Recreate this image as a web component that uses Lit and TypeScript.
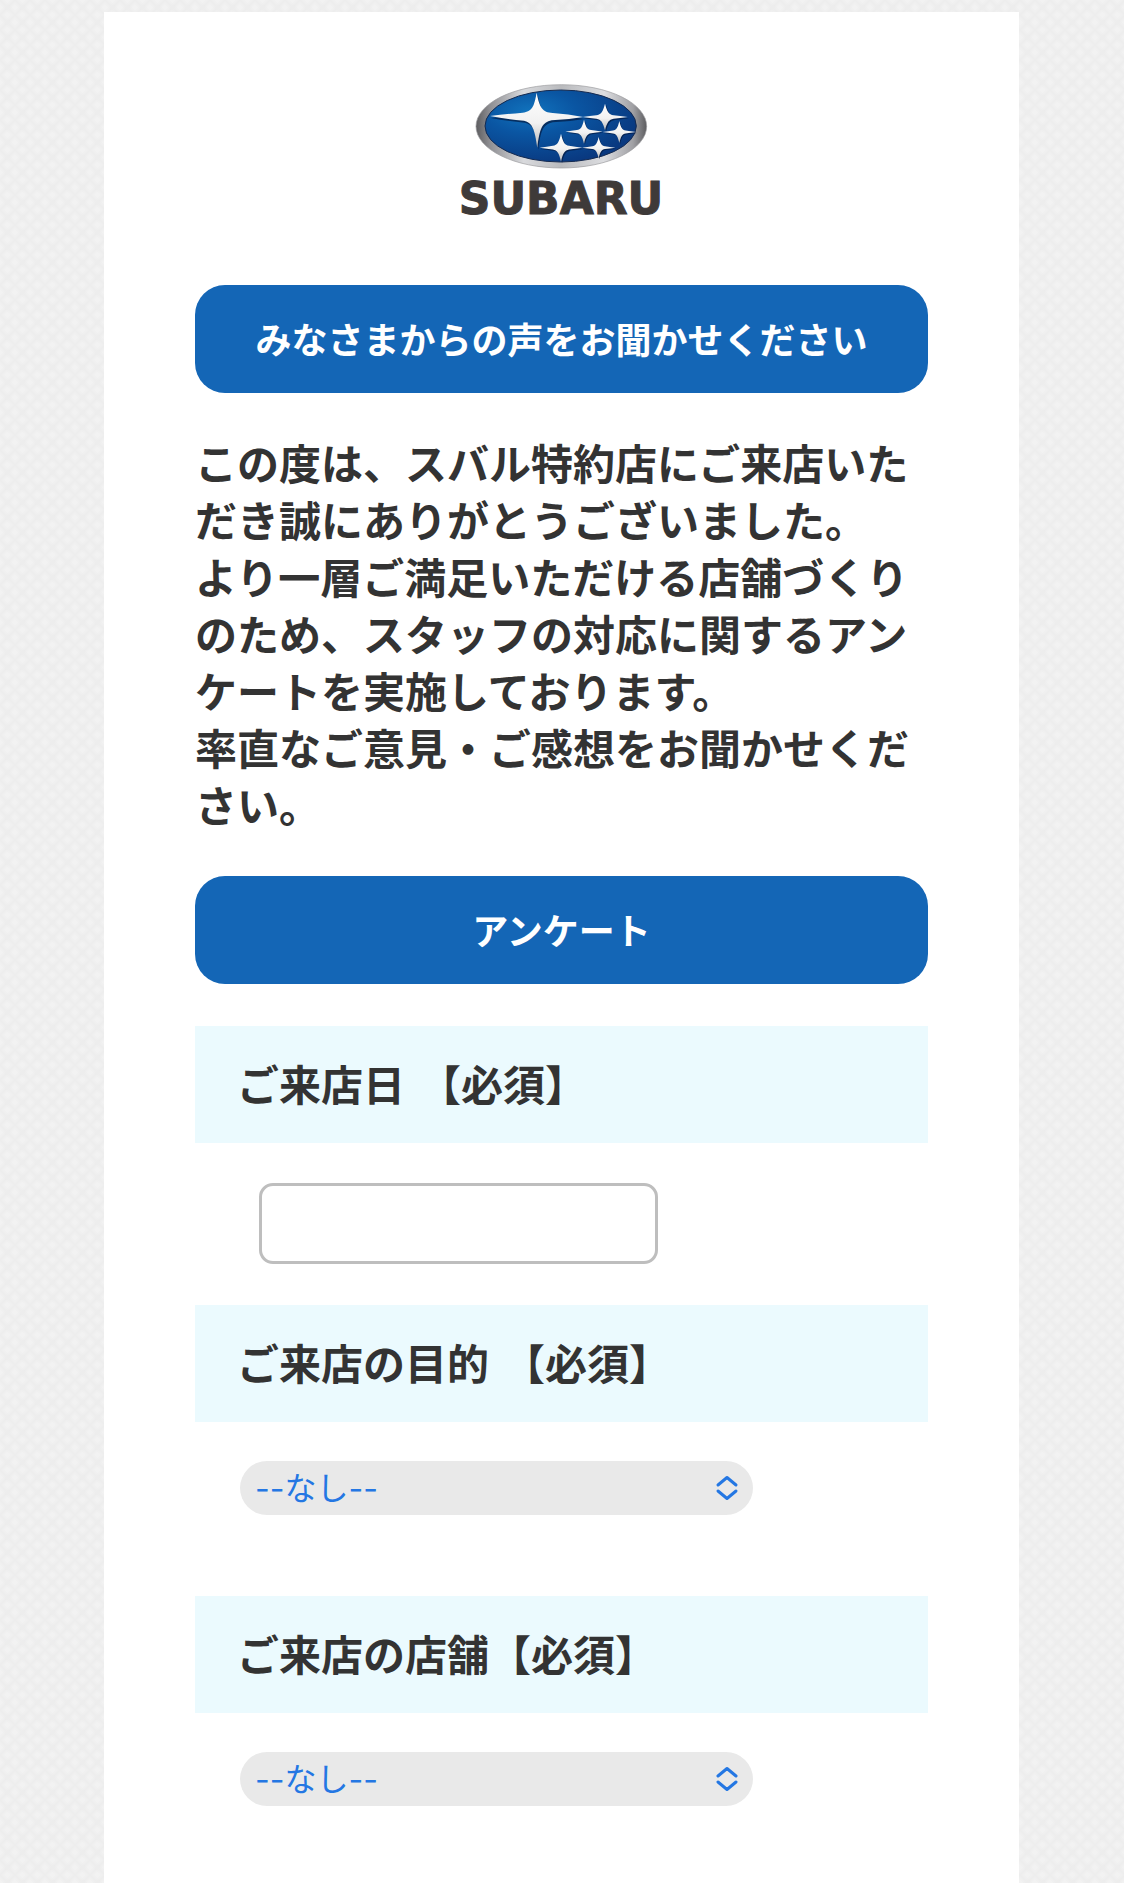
import { LitElement, html, css, svg } from "lit";
import { customElement, property } from "lit/decorators.js";

const STAR = "M0 -1 C.09 -.4 .17 -.19 .38 -.13 Q.65 -.07 1 0 Q.65 .07 .38 .13 C.17 .19 .09 .4 0 1 C-.09 .4 -.17 .19 -.38 .13 Q-.65 .07 -1 0 Q-.65 -.07 -.38 -.13 C-.17 -.19 -.09 -.4 0 -1Z";

interface Star {
  x: number;
  y: number;
  rx: number;
  ry: number;
}

const SMALL_STARS: Star[] = [
  { x: 495, y: 141, rx: 68, ry: 40 },
  { x: 432, y: 185, rx: 56, ry: 36 },
  { x: 538, y: 186, rx: 50, ry: 33 },
  { x: 363, y: 233, rx: 64, ry: 42 },
  { x: 476, y: 233, rx: 50, ry: 32 },
];

@customElement("brand-logo")
export class BrandLogo extends LitElement {
  static styles = css`
    :host {
      display: flex;
      justify-content: center;
    }
    .logo {
      display: block;
      width: 240px;
      height: 160px;
    }
    .wordmark {
      font-family: "DejaVu Sans", sans-serif;
      font-weight: 700;
      font-size: 132px;
      fill: #3e3a39;
      stroke: #3e3a39;
      stroke-width: 3px;
    }
  `;

  private star(s: Star) {
    return svg`
      <g transform="translate(${s.x} ${s.y}) scale(${s.rx} ${s.ry})">
        <path d=${STAR} transform="translate(.05 .09)" fill="#03183f" opacity=".7"></path>
        <path d=${STAR} fill="url(#silver)"></path>
      </g>`;
  }

  render() {
    return html`
      <svg class="logo" viewBox="6 0 720 480" role="img" aria-label="SUBARU">
        <defs>
          <linearGradient id="rim" x1="0" y1="0" x2="1" y2="0">
            <stop offset="0" stop-color="#5d5d60"></stop>
            <stop offset=".08" stop-color="#8e8e92"></stop>
            <stop offset=".28" stop-color="#d9dadd"></stop>
            <stop offset=".5" stop-color="#b9babd"></stop>
            <stop offset=".75" stop-color="#dcdde0"></stop>
            <stop offset=".92" stop-color="#a0a0a4"></stop>
            <stop offset="1" stop-color="#5d5d60"></stop>
          </linearGradient>
          <radialGradient id="field" cx=".3" cy=".3" r=".75">
            <stop offset="0" stop-color="#1173bd"></stop>
            <stop offset=".4" stop-color="#0a56a3"></stop>
            <stop offset="1" stop-color="#09387f"></stop>
          </radialGradient>
          <linearGradient id="silver" x1="0" y1="0" x2="0" y2="1">
            <stop offset="0" stop-color="#ffffff"></stop>
            <stop offset=".55" stop-color="#f1f1f1"></stop>
            <stop offset="1" stop-color="#b9b9b9"></stop>
          </linearGradient>
        </defs>
        <ellipse cx="364" cy="169" rx="256" ry="125" fill="url(#rim)" stroke="#9a9a9d" stroke-width="2"></ellipse>
        <ellipse cx="362" cy="168" rx="227" ry="108" fill="url(#field)" stroke="#152a50" stroke-width="3"></ellipse>
        <path
          d="M290 68 C299 114 307 126 338 129 Q385 132 430 141 Q385 149 335 151 C306 157 299 176 292 233 C284 178 278 158 252 152 Q200 148 150 138 Q200 132 248 128 C277 124 282 110 290 68Z"
          transform="translate(3 6)" fill="#03183f" opacity=".7"></path>
        <path
          d="M290 68 C299 114 307 126 338 129 Q385 132 430 141 Q385 149 335 151 C306 157 299 176 292 233 C284 178 278 158 252 152 Q200 148 150 138 Q200 132 248 128 C277 124 282 110 290 68Z"
          fill="url(#silver)"></path>
        ${SMALL_STARS.map((s) => this.star(s))}
        <text class="wordmark" x="363" y="432" text-anchor="middle">SUBARU</text>
      </svg>
    `;
  }
}

@customElement("survey-field")
export class SurveyField extends LitElement {
  @property() label = "";
  @property() kind: "text" | "select" = "text";
  @property({ type: Boolean }) spaced = false;

  static styles = css`
    :host {
      display: block;
    }
    .title {
      display: block;
      padding: 28px 42px 32px;
      background: #ebfafe;
      color: #333;
      font-size: 42px;
      font-weight: 700;
      line-height: 57px;
    }
    .required.spaced {
      margin-left: 14px;
    }
    .text-body {
      padding: 40px 64px 41px;
    }
    .select-body {
      padding: 39px 45px 81px;
    }
    .input {
      display: block;
      box-sizing: border-box;
      width: 399px;
      max-width: 100%;
      height: 81px;
      padding: 0 16px;
      border: 3px solid #bebebe;
      border-radius: 14px;
      background: #fff;
      color: #333;
      font: inherit;
      font-size: 36px;
    }
    .picker {
      position: relative;
      width: 513px;
      max-width: 100%;
    }
    .select {
      appearance: none;
      display: block;
      box-sizing: border-box;
      width: 100%;
      height: 54px;
      padding: 0 48px 0 15px;
      border: 0;
      border-radius: 27px;
      background: #e9e9e9;
      color: #2477e3;
      font-family: Inter, "Noto Sans CJK JP", sans-serif;
      font-size: 32px;
      font-weight: 400;
    }
    .chevrons {
      position: absolute;
      right: 14px;
      top: 14px;
      width: 24px;
      height: 26px;
      pointer-events: none;
    }
  `;

  render() {
    return html`
      <label class="title" for="control"
        >${this.label}<span class="required ${this.spaced ? "spaced" : ""}">【必須】</span></label
      >
      ${this.kind === "text"
        ? html`<div class="text-body"><input class="input" id="control" type="text" required /></div>`
        : html`<div class="select-body">
            <div class="picker">
              <select class="select" id="control" required>
                <option value="">--なし--</option>
              </select>
              <svg class="chevrons" viewBox="0 0 24 26" fill="none" stroke="#2477e3" stroke-width="3"
                stroke-linecap="round" stroke-linejoin="round" aria-hidden="true">
                <path d="M3 10 L12 2.5 L21 10 M3 16 L12 23.5 L21 16"></path>
              </svg>
            </div>
          </div>`}
    `;
  }
}

@customElement("app-root")
export class AppRoot extends LitElement {
  static styles = css`
    :host {
      display: flex;
      flex-direction: column;
      box-sizing: border-box;
      min-height: 100vh;
      padding: 12px 105px 0 104px;
      background-color: #f2f2f2;
      background-image: linear-gradient(45deg, transparent 34%, #ededed 50%, transparent 66%),
        linear-gradient(-45deg, transparent 34%, #ededed 50%, transparent 66%);
      background-size: 15px 15px;
      color: #333;
      font-family: "Noto Sans CJK JP", sans-serif;
    }
    .card {
      flex: 1;
      padding: 58px 91px 0;
      background: #fff;
    }
    .banner {
      margin: 0;
      padding: 26px 24px 28px;
      border-radius: 30px;
      background: #1466b6;
      color: #fff;
      font-size: 36px;
      font-weight: 700;
      line-height: 54px;
      text-align: center;
    }
    .top {
      margin-top: 55px;
    }
    .intro {
      margin: 40px 0 44px;
      font-size: 42px;
      font-weight: 700;
      line-height: 57px;
    }
    .survey {
      margin-top: 42px;
    }
  `;

  render() {
    return html`
      <main class="card">
        <brand-logo></brand-logo>
        <h1 class="banner top">みなさまからの声をお聞かせください</h1>
        <p class="intro">
          この度は、スバル特約店にご来店いただき誠にありがとうございました。<br />
          より一層ご満足いただける店舗づくりのため、スタッフの対応に関するアンケートを実施しております。<br />
          率直なご意見・ご感想をお聞かせください。
        </p>
        <h2 class="banner">アンケート</h2>
        <form class="survey">
          <survey-field label="ご来店日" kind="text" spaced></survey-field>
          <survey-field label="ご来店の目的" kind="select" spaced></survey-field>
          <survey-field label="ご来店の店舗" kind="select"></survey-field>
        </form>
      </main>
    `;
  }
}
